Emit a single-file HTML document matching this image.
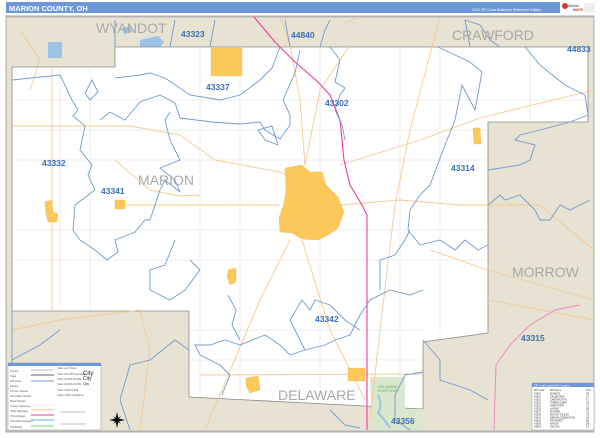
<!DOCTYPE html>
<html><head><meta charset="utf-8"><style>
html,body{margin:0;padding:0;background:#fff;width:600px;height:438px;overflow:hidden}
svg{display:block}
text{font-family:"Liberation Sans",sans-serif}
</style></head><body>
<svg width="600" height="438" viewBox="0 0 600 438" xmlns="http://www.w3.org/2000/svg">
<rect width="600" height="438" fill="#fff"/>
<!-- header -->
<rect x="6" y="2" width="554" height="11" fill="#6c97d8"/>
<text x="9" y="11" font-size="7.5" font-weight="bold" fill="#fff">MARION COUNTY, OH</text>
<text x="472" y="11" font-size="3.6" fill="#fff">2020 ZIP Code Business Reference Edition</text>
<rect x="560" y="2" width="36" height="11" fill="#fff"/>
<circle cx="565" cy="6" r="3" fill="#d33"/>
<text x="568" y="7" font-size="3.5" fill="#335">Market</text>
<text x="573" y="11" font-size="3.5" font-weight="bold" fill="#d33">MAPS</text>
<rect x="584" y="3" width="11" height="9" fill="#eee"/>
<!-- map frame -->
<rect x="6" y="16" width="588" height="416" fill="#e7e2d2" stroke="#999" stroke-width="0.8"/>
<line x1="6" y1="17" x2="594" y2="17" stroke="#bbb" stroke-width="1"/>
<line x1="6" y1="431" x2="594" y2="431" stroke="#bbb" stroke-width="1"/>
<!-- lakes in wyandot -->
<path d="M48,42 h14 v16 h-14z" fill="#9bc3e6"/>
<path d="M140,40 l18,-4 l6,6 l-4,5 l-20,0z" fill="#9bc3e6"/>
<path d="M122,28 l8,-2 l2,6 l-8,2z" fill="#9bc3e6"/>
<!-- county white -->
<path d="M12,67 L115,67 L115,47 L588,47 L588,122 L488,122 L488,333 L423,342 L423,409 L189,397 L189,311 L12,311 Z" fill="#fff" stroke="#8a8a8a" stroke-width="0.8"/>
<!-- park -->
<path d="M370,377 L405,377 L405,409 L423,409 L423,430 L372,430 Z" fill="#d9e8cc"/>
<path d="M378,395 q5,10 0,18 q8,8 12,15" stroke="#9bc3e6" stroke-width="2" fill="none"/>
<text x="388" y="388" font-size="3.5" fill="#6a6" text-anchor="middle">DELAWARE</text>
<text x="388" y="392" font-size="3.5" fill="#6a6" text-anchor="middle">STATE PARK</text>
<!-- roads grid light -->
<g stroke="#ddd" stroke-width="0.5">
<path d="M12,100 H588 M12,130 H488 M12,160 H488 M12,230 H488 M12,260 H488 M190,330 H423 M190,360 H423 M60,67 V311 M90,67 V311 M200,47 V397 M240,47 V397 M320,47 V397 M400,47 V409 M440,47 V333 M530,47 V122"/>
</g>
<!-- orange roads -->
<g stroke="#f5c992" stroke-width="0.9" fill="none">
<path d="M12,126 L130,126 L180,135 L215,160 L280,172 L320,190"/>
<path d="M52,67 L52,311"/>
<path d="M120,205 L280,205"/>
<path d="M340,205 L400,200 L460,205 L540,205 L594,250"/>
<path d="M340,165 L420,140 L480,118 L594,90"/>
<path d="M440,17 L410,130 L395,205 L380,330 L370,420"/>
<path d="M350,45 L320,90 L305,165"/>
<path d="M280,17 L290,45 L300,100 L305,165"/>
<path d="M302,240 L330,330 L365,400"/>
<path d="M290,240 L260,300 L205,430"/>
<path d="M200,375 L423,374"/>
<path d="M345,23 L360,17"/>
<path d="M12,330 L60,320 L140,310 L150,350 L140,430"/>
<path d="M115,160 L150,190 L180,196 L200,195"/>
<path d="M488,300 L594,320"/>
<path d="M430,250 L488,270 L594,300"/>
<path d="M20,30 L40,60 L30,90"/>
</g>
<!-- pink highway -->
<path d="M254,17 L275,42 L295,62 L318,82 L330,95 L340,120 L344,160 L350,185 L362,205 L367,215 L367,430" stroke="#ee3a9e" stroke-width="1.1" fill="none"/>
<path d="M580,305 L555,310 L530,325 L510,345 L496,365 L494,430" stroke="#ee8ac0" stroke-width="1" fill="none"/>
<!-- zip boundaries -->
<g stroke="#6f9bd0" stroke-width="0.9" fill="none">
<path d="M12,80 L60,75 L72,100 L78,110 L73,116 L85,126 L80,150 L92,165 L88,175 L95,190 L75,205 L73,230 L80,240 L95,250 L107,260 L118,252 L115,240 L135,232 L145,220 L150,220 L160,190 L165,180 L180,192 L175,180 L160,168 L180,160 L170,140 L165,120 L170,112"/>
<path d="M85,93 L90,100 L98,92 L92,80 Z"/>
<path d="M100,120 L110,112 L125,120 L140,102 L160,95 L175,103 L180,118"/>
<path d="M180,118 L212,122 L240,124 L260,122 L265,130 L280,139 L290,125 L290,115 L283,100 L295,73 L300,50"/>
<path d="M258,130 L265,140 L278,145 L272,126 Z"/>
<path d="M280,47 L272,68 L260,80 L240,95 L220,100 L190,95 L165,78 L150,73 L140,75 L115,78"/>
<path d="M330,47 L340,60 L335,82 L345,88 L340,95 L335,110 L342,125 L345,140"/>
<path d="M438,47 L470,62 L482,72 L475,110 L462,85 L455,120 L445,145 L430,185 L420,195 L410,210 L408,230 L420,245 L440,240 L455,250 L465,240 L478,250 L488,245"/>
<path d="M525,47 L540,65 L565,85 L585,95 L588,115 L570,122 L540,130 L520,135 L515,140 L535,145 L530,160 L520,165 L488,170"/>
<path d="M488,205 L500,195 L505,200 L520,195 L535,210 L540,220 L550,220 L560,205 L570,210 L590,200"/>
<path d="M488,400 L470,390 L440,380 L440,360 L423,340"/>
<path d="M423,290 L410,295 L390,290 L370,300 L360,315 L350,335 L335,340 L325,345 L305,350 L290,355 L280,345 L265,335 L240,345 L225,340 L210,345 L195,345 L200,355 L220,365 L230,375 L222,395"/>
<path d="M305,350 L290,320 L302,300 L310,310 L315,300 L330,305 L345,320 L360,330"/>
<path d="M380,290 L380,260 L395,255 L405,240 L410,230"/>
<path d="M190,260 L200,270 L185,290 L170,300 L150,290 L150,270 L165,265 L175,240"/>
<path d="M228,295 L236,310 L232,325 L240,340"/>
<path d="M189,350 L175,340 L150,360 L130,365 L120,400 L130,430"/>
<path d="M423,372 L405,375 L395,395 L395,420 L410,430"/>
<path d="M12,360 L40,345 L60,330"/>
<path d="M330,410 L345,425 L360,428"/>
<path d="M115,47 L115,20 M170,47 L175,20 M210,47 L215,20 M290,47 L285,20 M320,47 L325,30 L330,20 M470,47 L465,20 L480,25 L490,40 L500,47"/>
<path d="M12,311 L12,430"/>
</g>
<!-- cities -->
<g fill="#fcc85a" stroke="#e6b24a" stroke-width="0.3">
<path d="M285,168 L302,165 L310,172 L322,172 L326,185 L338,197 L344,212 L338,228 L330,234 L318,240 L302,239 L292,233 L280,232 L279,218 L284,203 L286,190 Z"/>
<rect x="211" y="48" width="31" height="28"/>
<rect x="115" y="200" width="10" height="9"/>
<path d="M45,202 L52,200 L53,212 L58,214 L57,222 L48,222 L46,214 Z"/>
<path d="M228,270 L236,268 L236,282 L230,285 L227,277 Z"/>
<path d="M246,378 L258,376 L260,390 L250,393 L246,386 Z"/>
<rect x="348" y="368" width="17" height="13"/>
<path d="M473,128 L480,128 L481,144 L474,144 Z"/>
</g>
<!-- county labels -->
<g font-size="14" fill="#a8a8a8">
<text x="96" y="33">WYANDOT</text>
<text x="452" y="40">CRAWFORD</text>
<text x="138" y="185">MARION</text>
<text x="512" y="277">MORROW</text>
<text x="278" y="400">DELAWARE</text>
</g>
<!-- zip labels -->
<g font-size="8.5" font-weight="bold" fill="#3b6fb6">
<text x="181" y="37">43323</text>
<text x="291" y="38">44840</text>
<text x="567" y="52">44833</text>
<text x="206" y="90">43337</text>
<text x="325" y="106">43302</text>
<text x="42" y="166">43332</text>
<text x="101" y="194">43341</text>
<text x="451" y="171">43314</text>
<text x="315" y="322">43342</text>
<text x="521" y="341">43315</text>
<text x="391" y="424">43356</text>
</g>
<!-- legend -->
<rect x="8" y="363" width="93" height="67" fill="#fff" stroke="#999" stroke-width="0.5"/>
<rect x="8" y="363" width="93" height="3" fill="#6c97d8"/>
<g font-size="2.6" fill="#555">
<text x="10" y="372">County</text><text x="10" y="377">State</text><text x="10" y="382">ZIP Code</text>
<text x="10" y="387">Streets</text><text x="10" y="392">Primary Streets</text><text x="10" y="397">Secondary Streets</text>
<text x="10" y="402">Minor Streets</text><text x="10" y="407">County Highways</text><text x="10" y="412">State Highways</text>
<text x="10" y="417">US Highways</text><text x="10" y="422">Interstate Highways</text><text x="10" y="428">Toll Roads</text>
<text x="57" y="369">Cities and Towns</text><text x="57" y="375">Cities 100,000 and Above</text>
<text x="57" y="380">Cities 25,000-99,999</text><text x="57" y="385">Cities 10,000-24,999</text>
<text x="57" y="391">Cities 2,500-9,999</text><text x="57" y="396">Cities 1,000 and Below</text>
</g>
<text x="83" y="375" font-size="6" fill="#222">City</text>
<text x="83" y="380" font-size="5" fill="#222">City</text>
<text x="83" y="385" font-size="3.5" fill="#222">City</text>
<g stroke-width="1" fill="none">
<path d="M31,370 H54" stroke="#bbb"/><path d="M31,375 H54" stroke="#999" stroke-width="1.5"/>
<path d="M31,381 H54" stroke="#6f9bd0"/><path d="M31,410 H54" stroke="#f5c992"/>
<path d="M31,415 H54" stroke="#ee3a9e"/><path d="M31,420 H54" stroke="#6fb5e6"/>
<path d="M31,426 H54" stroke="#7ed46f"/><path d="M31,405 H54" stroke="#eee"/>
<path d="M60,412 H86 M60,424 H86" stroke="#667" stroke-width="0.4"/>
</g>
<!-- compass -->
<g transform="translate(117,420)" fill="#111">
<path d="M0,-8 L1.5,-1.5 L8,0 L1.5,1.5 L0,8 L-1.5,1.5 L-8,0 L-1.5,-1.5 Z"/>
<path d="M-4,-4 L0,-1 L4,-4 L1,0 L4,4 L0,1 L-4,4 L-1,0 Z"/>
</g>
<!-- index -->
<rect x="532" y="383" width="62" height="47" fill="#fff" stroke="#999" stroke-width="0.5"/>
<rect x="532" y="383" width="62" height="4" fill="#6c97d8"/>
<text x="534" y="386.5" font-size="2.8" fill="#fff">ZIP Code Index/Grid Locator</text>
<g font-size="2.5" fill="#333">
<text x="534" y="391">ZIP Code</text><text x="550" y="391">ZIP Name</text><text x="586" y="391">LOC</text>
<text x="534" y="394.5">43302</text><text x="550" y="394.5">MARION</text><text x="586" y="394.5">D4</text>
<text x="534" y="397.5">43314</text><text x="550" y="397.5">CALEDONIA</text><text x="586" y="397.5">C1</text>
<text x="534" y="400.5">43315</text><text x="550" y="400.5">CARDINGTON</text><text x="586" y="400.5">E</text>
<text x="534" y="403.5">43322</text><text x="550" y="403.5">GREEN CAMP</text><text x="586" y="403.5">C6</text>
<text x="534" y="406.5">43323</text><text x="550" y="406.5">HARPSTER</text><text x="586" y="406.5">C1</text>
<text x="534" y="409.5">43332</text><text x="550" y="409.5">LA RUE</text><text x="586" y="409.5">B3</text>
<text x="534" y="412.5">43337</text><text x="550" y="412.5">MORRAL</text><text x="586" y="412.5">C1</text>
<text x="534" y="415.5">43338</text><text x="550" y="415.5">MOUNT GILEAD</text><text x="586" y="415.5">C6</text>
<text x="534" y="418.5">43341</text><text x="550" y="418.5">NEW BLOOMINGTON</text><text x="586" y="418.5">C4</text>
<text x="534" y="421.5">43342</text><text x="550" y="421.5">PROSPECT</text><text x="586" y="421.5">B5</text>
<text x="534" y="424.5">43356</text><text x="550" y="424.5">WALDO</text><text x="586" y="424.5">D6</text>
<text x="534" y="427.5">44833</text><text x="550" y="427.5">GALION</text><text x="586" y="427.5">E1</text>
</g>
</svg>
</body></html>
